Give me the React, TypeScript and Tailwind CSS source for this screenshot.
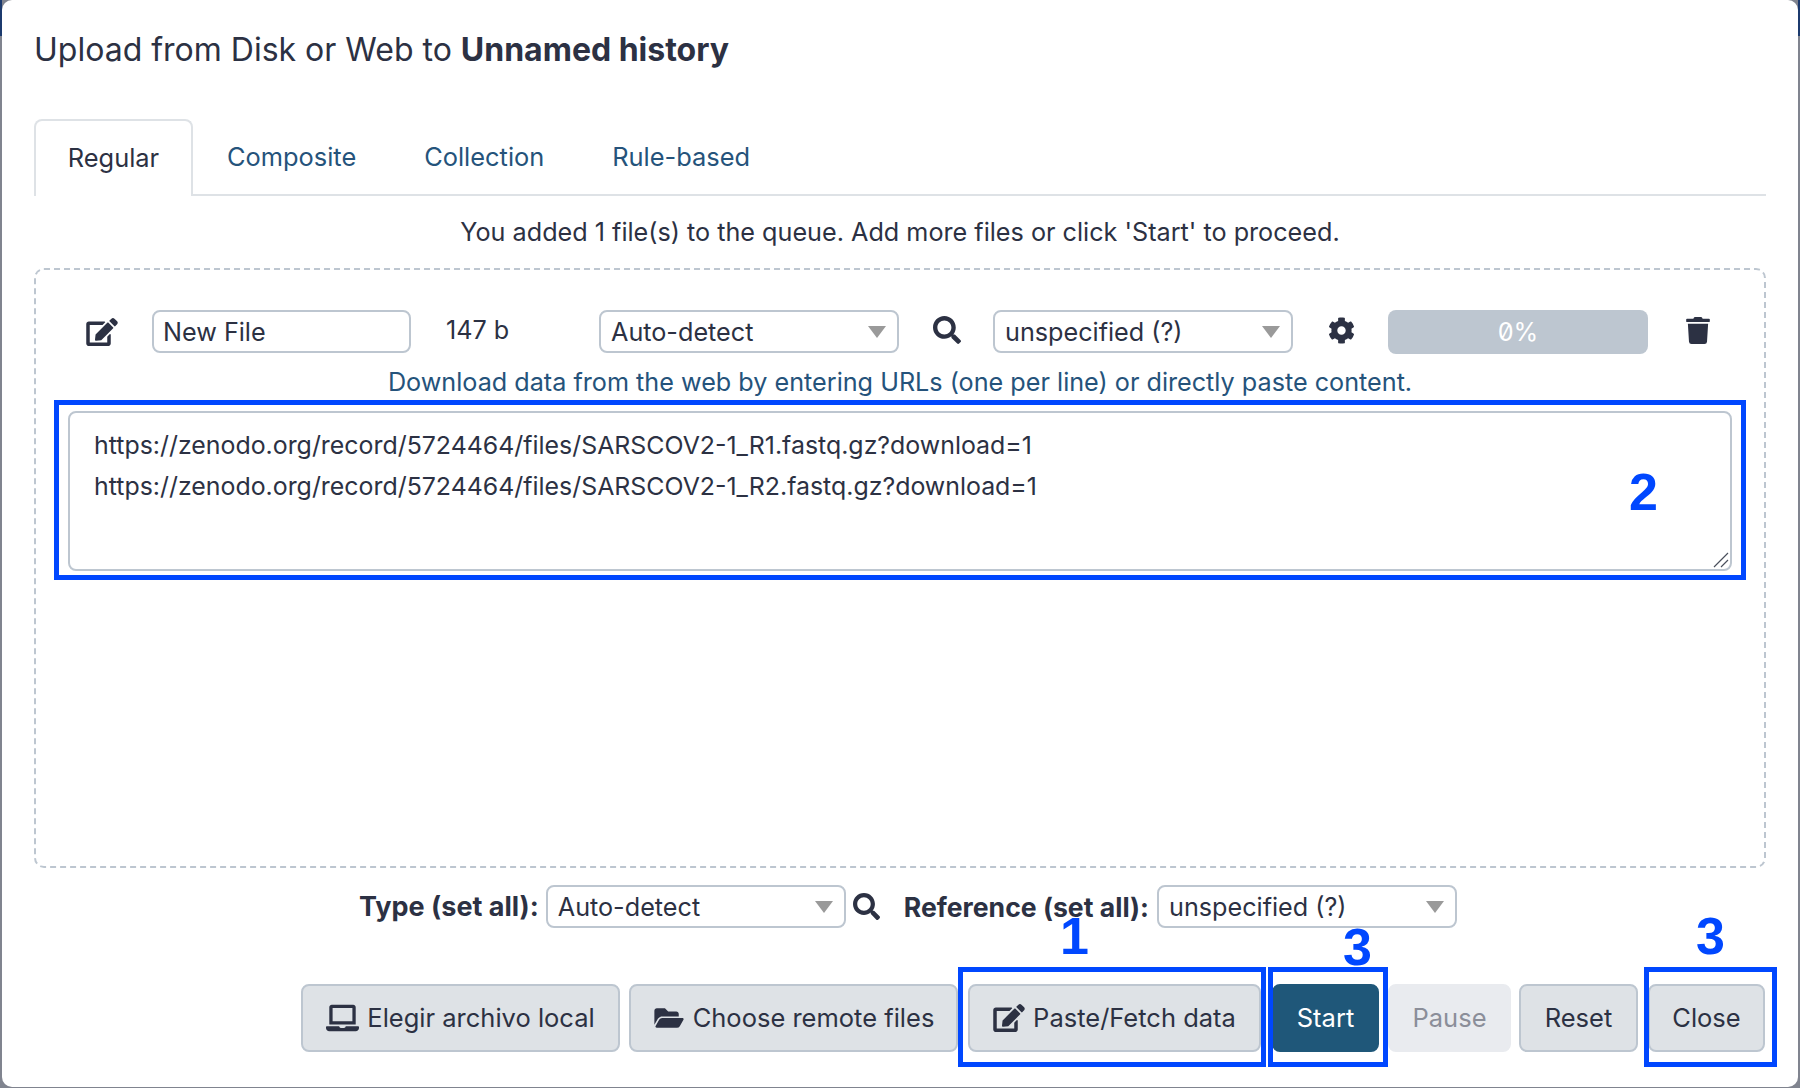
import React from 'react';
import { FaCog, FaEdit, FaFolderOpen, FaLaptop, FaSearch, FaTrash } from 'react-icons/fa';

const Select = ({ value, width = 'w-[300px]' }: { value: string; width?: string }) => (
  <div className={`${width} h-[43px] shrink-0 flex items-center justify-between pl-[10px] pr-[11px] bg-white border-2 border-[#bdc6d0] rounded-[8px] text-[#2c3143]`}>
    <span className="pt-[2px]">{value}</span>
    <svg width="18" height="12" viewBox="0 0 18 12">
      <path d="M0 0h18L9 12z" fill="#9a9a9a" />
    </svg>
  </div>
);

const Button = ({ children, className }: { children: React.ReactNode; className: string }) => (
  <button className={`h-[68px] shrink-0 flex items-center justify-center gap-[8px] rounded-[8px] border-2 border-[#bdc6d0] bg-[#dee2e6] text-[25.5px] text-[#2c3143] ${className}`}>
    {children}
  </button>
);

// blue annotations drawn on top of the screenshot
const Mark = ({ className }: { className: string }) => (
  <div className={`absolute border-[5px] border-[#0047ff] ${className}`} />
);

const Num = ({ n, className }: { n: string; className: string }) => (
  <div className={`absolute text-[52px] leading-none font-bold text-[#0047ff] font-['Liberation_Sans',sans-serif] ${className}`}>{n}</div>
);

const App: React.FC = () => {
  return (
    <div className="relative w-full h-[1088px] overflow-hidden bg-[#80848f] px-[2px] font-['Inter',sans-serif] text-[25.2px] text-[#2c3143]">
      <div className="absolute left-0 top-0 w-[2px] h-[36px] bg-[#1c3a6e]" />
      <div className="absolute right-0 top-0 w-[2px] h-[36px] bg-[#1c3a6e]" />

      <div className="h-[1087px] bg-white rounded-[10px] px-[32px] pt-[30px]">
        <h5 className="text-[32px] leading-[40px] h-[40px]">
          Upload from Disk or Web to <b className="font-bold">Unnamed history</b>
        </h5>

        <div className="mt-[49px] h-[77px] flex border-b-2 border-[#dee2e6] text-[25.4px]">
          <div className="w-[159px] h-[77px] flex items-center justify-center bg-white border-2 border-b-0 border-[#dee2e6] rounded-t-[8px]">Regular</div>
          <div className="h-[77px] flex items-center pl-[34px] text-[#25537b]">Composite</div>
          <div className="h-[77px] flex items-center pl-[68px] text-[#25537b]">Collection</div>
          <div className="h-[77px] flex items-center pl-[68px] text-[#25537b]">Rule-based</div>
        </div>

        <p className="mt-[19px] h-[34px] leading-[34px] text-center">You added 1 file(s) to the queue. Add more files or click 'Start' to proceed.</p>

        <div className="mt-[19px] h-[600px] border-2 border-dashed border-[#bdc6d0] rounded-[10px] pt-[40px] px-[18px]">
          <div className="flex items-center h-[43px]">
            <FaEdit className="ml-[32px] w-[32px] h-[28px] shrink-0" />
            <input readOnly value="New File" className="ml-[34px] w-[259px] h-[43px] px-[9px] border-2 border-[#bdc6d0] rounded-[8px] outline-none" />
            <span className="ml-[35px] w-[153px] -mt-[1px]">147 b</span>
            <Select value="Auto-detect" />
            <FaSearch className="ml-[34px] w-[28px] h-[28px] shrink-0 -mt-[3px]" />
            <div className="ml-[32px]"><Select value="unspecified (?)" /></div>
            <FaCog className="ml-[35px] w-[27px] h-[27px] shrink-0 -mt-[3px]" />
            <div className="ml-[33px] w-[260px] h-[44px] pt-[2px] flex items-center justify-center rounded-[8px] bg-[#bdc6d0] text-white slashed-zero">0%</div>
            <FaTrash className="ml-[38px] w-[24px] h-[27px] shrink-0 -mt-[3px]" />
          </div>

          <p className="mt-[12px] h-[34px] leading-[34px] text-center text-[#25537b]">Download data from the web by entering URLs (one per line) or directly paste content.</p>

          <div className="relative mt-[12px] mx-[14px] w-[1664px] h-[160px]">
            <textarea
              readOnly
              rows={2}
              value={'https://zenodo.org/record/5724464/files/SARSCOV2-1_R1.fastq.gz?download=1\nhttps://zenodo.org/record/5724464/files/SARSCOV2-1_R2.fastq.gz?download=1'}
              className="block w-full h-full pt-[12px] px-[24px] text-[24.9px] leading-[41px] border-2 border-[#bdc6d0] rounded-[8px] outline-none whitespace-pre resize-none"
            />
            <svg className="absolute right-[3px] bottom-[3px]" width="16" height="16" viewBox="0 0 16 16" fill="none" stroke="#4a4f5c" strokeWidth="1.2">
              <path d="M1 15L15 1M8 15L15 8" />
            </svg>
          </div>
        </div>

        <div className="mt-[17px] h-[43px] flex items-center pl-[325px]">
          <b className="pt-[2px] font-bold text-[27px] whitespace-nowrap">Type (set all):</b>
          <div className="ml-[7px]"><Select value="Auto-detect" /></div>
          <FaSearch className="ml-[7px] w-[27px] h-[27px] shrink-0" />
          <b className="ml-[24px] pt-[2px] font-bold text-[26.6px] whitespace-nowrap">Reference (set all):</b>
          <div className="ml-[8px]"><Select value="unspecified (?)" /></div>
        </div>

        <div className="mt-[56px] flex pl-[267px]">
          <Button className="w-[319px]"><FaLaptop className="w-[33px] h-[28px]" />Elegir archivo local</Button>
          <Button className="ml-[9px] w-[329px]"><FaFolderOpen className="w-[32px] h-[26px]" />Choose remote files</Button>
          <Button className="ml-[10px] w-[293px]"><FaEdit className="w-[32px] h-[28px]" />Paste/Fetch data</Button>
          <Button className="ml-[11px] w-[107px] !bg-[#1f5779] !border-[#1f5779] !text-white">Start</Button>
          <Button className="ml-[9px] w-[123px] !bg-[#e9ebef] !border-[#e9ebef] !text-[#8b8e99]">Pause</Button>
          <Button className="ml-[8px] w-[119px]">Reset</Button>
          <Button className="ml-[10px] w-[117px]">Close</Button>
        </div>
      </div>

      <Mark className="left-[54px] top-[400px] w-[1692px] h-[180px]" />
      <Mark className="left-[958px] top-[967px] w-[308px] h-[100px]" />
      <Mark className="left-[1268px] top-[967px] w-[120px] h-[100px]" />
      <Mark className="left-[1644px] top-[967px] w-[133px] h-[100px]" />
      <Num n="2" className="left-[1629px] top-[466px]" />
      <Num n="1" className="left-[1060px] top-[910px]" />
      <Num n="3" className="left-[1343px] top-[921px]" />
      <Num n="3" className="left-[1696px] top-[910px]" />
    </div>
  );
};

export default App;
